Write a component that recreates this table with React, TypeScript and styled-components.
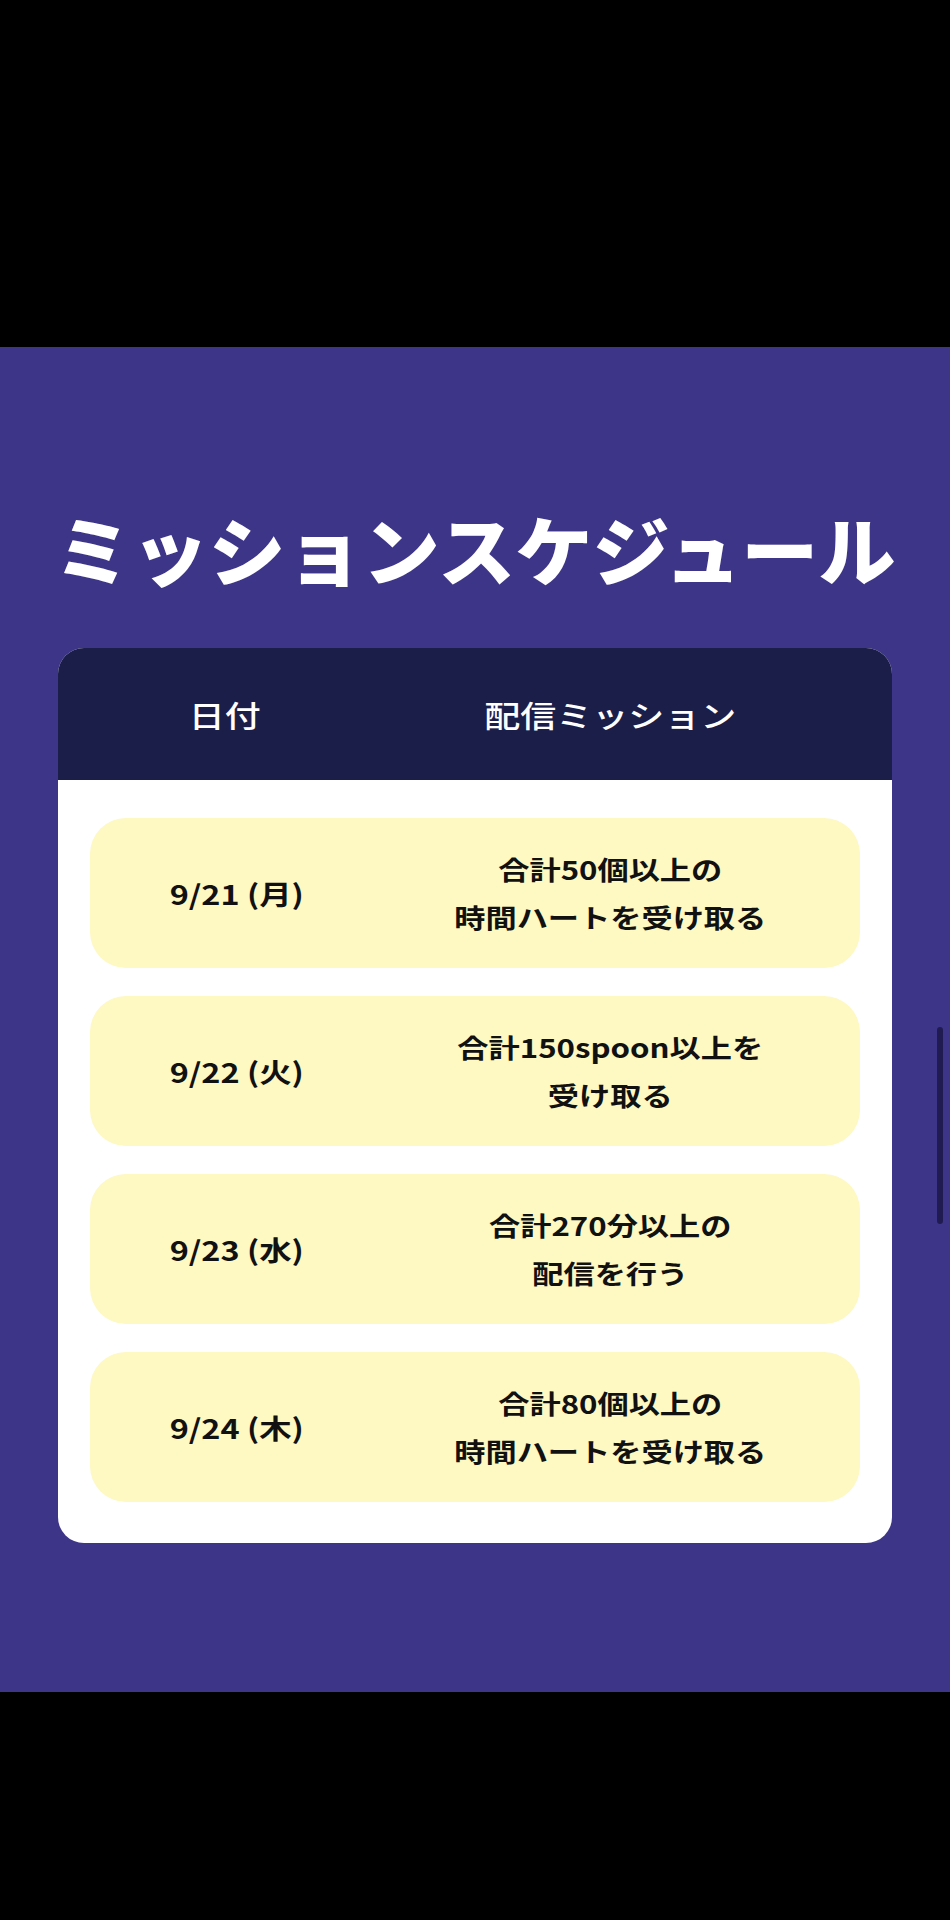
import React from "react";
import styled, { createGlobalStyle } from "styled-components";

const GlobalStyle = createGlobalStyle`
  html, body {
    margin: 0;
    padding: 0;
    background: #000;
  }
  body {
    font-family: "Noto Sans CJK JP", "Noto Sans", sans-serif;
  }
`;

const Page = styled.div`
  position: relative;
  width: 950px;
  height: 1920px;
  display: flex;
  flex-direction: column;
  background: #000;
  overflow: hidden;
`;

const Blank = styled.div<{ $h: number }>`
  height: ${(p) => p.$h}px;
  flex-shrink: 0;
  background: #000;
`;

const Section = styled.section`
  height: 1345px;
  flex-shrink: 0;
  background: #3d3587;
  display: flex;
  flex-direction: column;
  align-items: center;
  padding-top: 158px;
  box-sizing: border-box;
`;

const Title = styled.h1`
  margin: 0;
  height: 86px;
  line-height: 86px;
  font-size: 68px;
  font-weight: 900;
  color: #fff;
  white-space: nowrap;
  transform: scale(1.134, 1.1);
`;

const Card = styled.div`
  margin-top: 57px;
  width: 834px;
  background: #fff;
  border-radius: 26px;
  overflow: hidden;
`;

const Cols = styled.div`
  display: grid;
  grid-template-columns: 35% 65%;
  align-items: center;
  text-align: center;
`;

const Header = styled(Cols)`
  height: 132px;
  padding: 0 32px;
  background: #1c1e4a;
  color: #fff;
`;

const HeadCell = styled.div`
  font-size: 30px;
  font-weight: 500;
  transform: scaleX(1.2);
`;

const Body = styled.div`
  display: flex;
  flex-direction: column;
  gap: 28px;
  padding: 38px 32px 41px;
`;

const Row = styled(Cols)`
  height: 150px;
  background: #fef8c2;
  border-radius: 36px;
  color: #111;
`;

const DateCell = styled.div`
  padding-left: 20px;
  font-size: 27px;
  font-weight: 700;
  transform: scaleX(1.2);
`;

const MissionCell = styled.div`
  font-size: 26px;
  line-height: 48px;
  font-weight: 700;
  transform: scaleX(1.2);
`;

const Scrollbar = styled.div`
  position: absolute;
  left: 937px;
  top: 1027px;
  width: 6px;
  height: 197px;
  border-radius: 3px;
  background: #201c52;
`;

const missions = [
  { date: "9/21 (月)", lines: ["合計50個以上の", "時間ハートを受け取る"] },
  { date: "9/22 (火)", lines: ["合計150spoon以上を", "受け取る"] },
  { date: "9/23 (水)", lines: ["合計270分以上の", "配信を行う"] },
  { date: "9/24 (木)", lines: ["合計80個以上の", "時間ハートを受け取る"] },
];

const App: React.FC = () => {
  return (
    <>
      <GlobalStyle />
      <Page>
        <Blank $h={347} />
        <Section>
          <Title>ミッションスケジュール</Title>
          <Card>
            <Header>
              <HeadCell>日付</HeadCell>
              <HeadCell>配信ミッション</HeadCell>
            </Header>
            <Body>
              {missions.map((m) => (
                <Row key={m.date}>
                  <DateCell>{m.date}</DateCell>
                  <MissionCell>
                    {m.lines.map((line) => (
                      <div key={line}>{line}</div>
                    ))}
                  </MissionCell>
                </Row>
              ))}
            </Body>
          </Card>
        </Section>
        <Blank $h={228} />
        <Scrollbar />
      </Page>
    </>
  );
};

export default App;
